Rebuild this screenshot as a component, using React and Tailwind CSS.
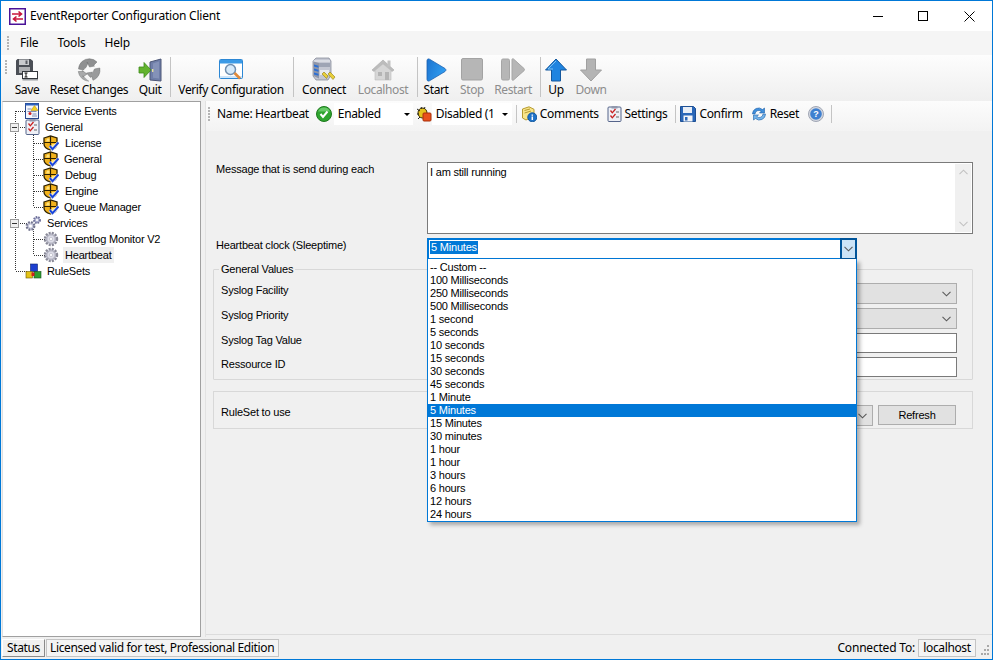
import React from "react";

const UI = { fontFamily: '"Noto Sans", "Open Sans", sans-serif' };
const MS = { fontFamily: '"Liberation Sans", Arial, sans-serif' };

function AppIcon() {
  return (
    <svg width="17" height="17" viewBox="0 0 17 17">
      <rect x="0.75" y="0.75" width="15.5" height="15.5" fill="#fff" stroke="#4a1298" strokeWidth="1.5" />
      <path d="M3 6h9M9.5 3.5 12.5 6 9.5 8.5" fill="none" stroke="#c8143c" strokeWidth="1.6" />
      <path d="M14 11H5M7.5 8.5 4.5 11l3 2.500" fill="none" stroke="#c8143c" strokeWidth="1.6" />
    </svg>
  );
}
function SaveBig() {
  return (
    <svg width="24" height="24" viewBox="0 0 24 24">
      <path d="M1 2.500 2.500 1h13L18 3v14H1z" fill="#4b4f56" />
      <rect x="4" y="1.500" width="10" height="5.500" fill="#c9cbce" />
      <rect x="10.500" y="2.500" width="2" height="3.500" fill="#5a5e64" />
      <rect x="4" y="9" width="11" height="6" fill="#aeb0b3" />
      <rect x="7.500" y="13.500" width="15" height="7" fill="#fff" stroke="#33373c" />
      <path d="M9.500 15h3M9.500 19h3M11 15v4" stroke="#111" fill="none" />
      <rect x="7.500" y="21" width="15.500" height="1.500" fill="#9a9da1" />
    </svg>
  );
}
function ResetBig() {
  return (
    <svg width="24" height="24" viewBox="0 0 24 24">
      <path d="M5 3.500A11 11 0 0 1 20 4l-3.500 3.500 1 .5L12.500 9 10 4l.8 1.500L9 9.500A6 6 0 0 0 6.500 12L1.500 11A11 11 0 0 1 5 3.500z" fill="#8f9091" stroke="#6f7071" strokeWidth="0.500" />
      <path d="M22.800 10A11 11 0 0 1 16 22.300L14.500 18l-1 1.500L9.500 15l5.300-.8-.6 1A6 6 0 0 0 17.500 11z" fill="#9a9b9c" stroke="#6f7071" strokeWidth="0.500" />
      <path d="M12 23.200A11 11 0 0 1 1.300 13.500L6 13.500l-.8-1L10 16l-4 3-.2-1.500" fill="#a9aaab" stroke="#6f7071" strokeWidth="0.500" />
    </svg>
  );
}
function QuitBig() {
  return (
    <svg width="24" height="24" viewBox="0 0 24 24">
      <path d="M12 4 23 1v22l-11-1z" fill="#6f7ea8" stroke="#4c5777" />
      <path d="M15 5.500 21 3.500v17l-6-.7z" fill="#8492b8" />
      <rect x="14" y="11" width="1.400" height="3" fill="#e8e0a0" />
      <path d="M1 9h5V4.500L13 12l-7 7.500V15H1z" fill="#63b32e" stroke="#3e8a1a" strokeWidth="0.800" />
    </svg>
  );
}
function VerifyBig() {
  return (
    <svg width="25" height="24" viewBox="0 0 25 24">
      <rect x="0.500" y="1.500" width="23" height="19" rx="1" fill="#fff" stroke="#2c87d4" />
      <rect x="1" y="2" width="22" height="3.500" fill="#3b9ae6" />
      <rect x="1" y="18" width="22" height="2" fill="#cfe6fa" />
      <circle cx="11.500" cy="11.500" r="5" fill="#d6eafa" stroke="#6f8fb0" strokeWidth="1.500" />
      <path d="m15.500 15 5.500 5.500" stroke="#e08a3a" strokeWidth="2.600" />
    </svg>
  );
}
function ConnectBig() {
  return (
    <svg width="26" height="26" viewBox="0 0 26 26">
      <path d="M2 4 5 1h13l2 3v14l-3 5H5l-3-4z" fill="#c4c7d2" stroke="#7d8190" strokeWidth="0.700" />
      <path d="M2.500 4H19" stroke="#eef0f4" fill="none" />
      <path d="M2.500 4.500 8 6v15.500L2.500 19z" fill="#8f96a8" />
      <path d="M3 7.500l4.500 1.200v2L3 9.500zM3 11.500l4.500 1.200v2L3 13.500zM3 15.500l4.500 1.200v2L3 17.500z" fill="#2b6fd4" />
      <path d="M8 6h11v4H8z" fill="#9ea4b4" />
      <path d="M9 13h9v5H9z" fill="#e8eaf0" />
      <path d="m11 17 2-2 4 4-1.500 2.500z" fill="#e9cf3a" stroke="#8d7a14" strokeWidth="0.600" />
      <path d="m17 17 2-2 5 5-2 2.500z" fill="#e9cf3a" stroke="#8d7a14" strokeWidth="0.600" />
    </svg>
  );
}
function HouseBig() {
  return (
    <svg width="24" height="24" viewBox="0 0 24 24">
      <path d="M1 12 12 2l11 10-2 1.500L12 6l-9 7.500z" fill="#bcbcbc" stroke="#aaa" strokeWidth="0.600" />
      <path d="M4 12.500 12 6l8 6.500V22H4z" fill="#d6d6d6" stroke="#bdbdbd" strokeWidth="0.600" />
      <rect x="7" y="14" width="4" height="4" fill="#b4b4b4" />
      <rect x="14" y="14" width="4" height="8" fill="#b4b4b4" />
      <rect x="16.500" y="2.500" width="3" height="6" fill="#c2c2c2" />
    </svg>
  );
}
function StartBig() {
  return (
    <svg width="22" height="24" viewBox="0 0 22 24">
      <defs>
        <linearGradient id="blueg" x1="0" y1="0" x2="1" y2="0.400">
          <stop offset="0" stopColor="#1c74d0" />
          <stop offset="1" stopColor="#2f9cf0" />
        </linearGradient>
      </defs>
      <path d="M2 2.500C2 1 3.500.5 4.500 1.200L20 10.500c1.200.8 1.200 2.200 0 3L4.500 22.800C3.500 23.500 2 23 2 21.500z" fill="url(#blueg)" stroke="#1a5fb0" strokeWidth="0.800" />
    </svg>
  );
}
function StopBig() {
  return (
    <svg width="22" height="23" viewBox="0 0 22 23">
      <rect x="0.500" y="0.500" width="21" height="21.500" rx="1.500" fill="#b6b6b6" stroke="#a3a3a3" />
    </svg>
  );
}
function RestartBig() {
  return (
    <svg width="24" height="23" viewBox="0 0 24 23">
      <rect x="0.500" y="1" width="8" height="21" rx="1.500" fill="#b6b6b6" stroke="#a6a6a6" />
      <path d="M11 1.500c0-.8 1-1 1.500-.5L23 10.500c.8.700.8 1.500 0 2.200L12.500 22c-.5.500-1.500.3-1.500-.5z" fill="#b6b6b6" stroke="#a6a6a6" />
    </svg>
  );
}
function UpBig() {
  return (
    <svg width="22" height="24" viewBox="0 0 22 24">
      <path d="M11 1 21.500 12H15.500V23H6.500V12H.500z" fill="#1f84e0" stroke="#14589e" strokeWidth="1" />
      <path d="M11 3 3 11h5" fill="none" stroke="#7cc1f5" strokeWidth="1" />
    </svg>
  );
}
function DownBig() {
  return (
    <svg width="22" height="24" viewBox="0 0 22 24">
      <path d="M6.500 1h9v11h6L11 23 .5 12h6z" fill="#b4b4b4" stroke="#a0a0a0" strokeWidth="1" />
    </svg>
  );
}

function Shield() {
  return (
    <svg width="16" height="16" viewBox="0 0 16 16" className="shrink-0">
      <path d="M1 3 7.500 1 14 3v6c0 3-3 5-6.500 6C4 14 1 12 1 9z" fill="#f2b21c" stroke="#2c2000" strokeWidth="1.300" />
      <path d="M7.500 1v13M1 7.500h13" stroke="#2c2000" strokeWidth="1.200" />
      <path d="M4 3.500h2.500v3H3zM9 9h3.500L11 12H9z" fill="#ffe27a" />
      <path d="m6.800 11 2.700 3.200L15.500 7.500" fill="none" stroke="#fff" strokeWidth="3.200" />
      <path d="m6.800 11 2.700 3.200L15.500 7.500" fill="none" stroke="#1a46d8" strokeWidth="2" />
    </svg>
  );
}
function Gears() {
  return (
    <svg width="17" height="17" viewBox="0 0 17 17" className="shrink-0">
      <circle cx="5.500" cy="11" r="3.800" fill="#c8c9dc" stroke="#74768f" strokeWidth="2.200" strokeDasharray="1.800 1.200" />
      <circle cx="5.500" cy="11" r="1.500" fill="#fff" />
      <circle cx="12" cy="5" r="3" fill="#b5b8d6" stroke="#70729a" strokeWidth="2" strokeDasharray="1.500 1" />
      <circle cx="12" cy="5" r="1.100" fill="#fff" />
    </svg>
  );
}
function Gear() {
  return (
    <svg width="16" height="16" viewBox="0 0 16 16" className="shrink-0">
      <circle cx="8" cy="8" r="6" fill="#d8d9e6" stroke="#8a8a98" strokeWidth="2.400" strokeDasharray="2 1.150" />
      <circle cx="8" cy="8" r="4.200" fill="#dddde8" stroke="#9a9aa8" strokeWidth="0.800" />
      <circle cx="8" cy="8" r="1.700" fill="#f8f8fb" stroke="#a8a8b4" strokeWidth="0.500" />
    </svg>
  );
}
function ServiceEventsIcon() {
  return (
    <svg width="15" height="16" viewBox="0 0 15 16" className="shrink-0">
      <rect x="0.500" y="0.500" width="13" height="15" fill="#f4f6fb" stroke="#27468c" />
      <rect x="0.500" y="0.500" width="13" height="2" fill="#2f62bd" />
      <path d="M2.500 6h4M2.500 8.500h9M7.500 11h4M7 13h5" stroke="#7f8db5" />
      <path d="M9.500 2.500 13 7.500H6z" fill="#f5d020" stroke="#b08a00" strokeWidth="0.500" />
      <circle cx="5" cy="10.500" r="1.500" fill="#d02020" />
    </svg>
  );
}
function CheckDoc({ size = 15 }) {
  return (
    <svg width={size} height={size + 1} viewBox="0 0 15 16" className="shrink-0">
      <rect x="1" y="1" width="13" height="14.500" rx="1" fill="#eef0f6" stroke="#55648a" />
      <rect x="4.500" y="0" width="6" height="2.500" fill="#9098ad" />
      <path d="m3.500 4.500 1.800 2.300L8.500 3" fill="none" stroke="#c81e1e" strokeWidth="1.300" />
      <path d="m3.500 9.500 1.800 2.300L8.500 8" fill="none" stroke="#c81e1e" strokeWidth="1.300" />
      <path d="M9 6h3M9 11h3" stroke="#666" />
    </svg>
  );
}
function RuleSetsIcon() {
  return (
    <svg width="17" height="17" viewBox="0 0 17 17" className="shrink-0">
      <rect x="5.500" y="1" width="7" height="7.500" fill="#1c3fd0" stroke="#10246c" strokeWidth="0.600" />
      <rect x="1" y="8.500" width="6.500" height="6.500" fill="#e4c316" stroke="#6a5806" strokeWidth="0.600" />
      <rect x="9" y="8.500" width="7" height="6.500" fill="#2e9e2e" stroke="#14501e" strokeWidth="0.600" />
      <rect x="6.500" y="9.500" width="3" height="3.500" fill="#d02020" />
    </svg>
  );
}
function GreenCheck() {
  return (
    <svg width="16" height="16" viewBox="0 0 16 16" className="shrink-0">
      <circle cx="8" cy="8" r="7.500" fill="#2fa52f" stroke="#1e7a1e" />
      <path d="M8 1.500a6.500 6.500 0 0 1 6 4H2a6.500 6.500 0 0 1 6-4z" fill="#7fd87f" opacity="0.700" />
      <path d="m4.500 8 2.500 3 4.500-5.500" fill="none" stroke="#fff" strokeWidth="2" />
    </svg>
  );
}
function BugIcon() {
  return (
    <svg width="16" height="16" viewBox="0 0 16 16" className="shrink-0">
      <ellipse cx="6.500" cy="7" rx="4.500" ry="5" fill="#e5c21e" stroke="#3a2d00" />
      <path d="M1 3l3 2M1 8h2M2 13l2-2M5 1l1 2M9 1 8 3" stroke="#222" fill="none" />
      <rect x="7" y="7" width="8" height="8" rx="1" fill="#e8501c" stroke="#a82e08" />
    </svg>
  );
}
function CommentsIcon() {
  return (
    <svg width="16" height="16" viewBox="0 0 16 16" className="shrink-0">
      <path d="M1.500 3 8 .8l5 2.500V10L5 14 1.500 12z" fill="#f8e58a" stroke="#b59a30" />
      <path d="M3.500 4.500 9 3M3.500 7 10 5" stroke="#b59a30" fill="none" />
      <circle cx="11.300" cy="11.300" r="4.500" fill="#1e72c8" stroke="#155a9e" />
      <path d="M11.300 8.500v1.200M11.300 10.500v3.500" stroke="#fff" strokeWidth="1.500" />
    </svg>
  );
}
function SaveSmall() {
  return (
    <svg width="16" height="16" viewBox="0 0 16 16" className="shrink-0">
      <path d="M.5.500h13l2 2v13H.5z" fill="#2a67b8" stroke="#1d4f94" />
      <rect x="3" y="1" width="9" height="6" fill="#e8eef6" />
      <rect x="3.500" y="9.500" width="9" height="6" fill="#f3f5f8" />
      <rect x="5" y="11" width="2.500" height="3.500" fill="#2a67b8" />
    </svg>
  );
}
function ResetSmall() {
  return (
    <svg width="16" height="16" viewBox="0 0 16 16" className="shrink-0">
      <path d="M1.500 8a6 6 0 0 1 10-4.500L13.500 2v5h-5l1.700-1.700A3.800 3.800 0 0 0 4 8z" fill="#3f8fdc" stroke="#1f5fa8" strokeWidth="0.600" />
      <path d="M14.500 8a6 6 0 0 1-10 4.500L2.500 14V9h5l-1.700 1.700A3.800 3.800 0 0 0 12 8z" fill="#74b4ea" stroke="#1f5fa8" strokeWidth="0.600" />
    </svg>
  );
}
function HelpIcon() {
  return (
    <svg width="16" height="16" viewBox="0 0 16 16" className="shrink-0">
      <circle cx="8" cy="8" r="7.500" fill="#d4d8e0" stroke="#a0a6b4" />
      <circle cx="8" cy="8" r="5.800" fill="#3f80d0" />
      <text x="8" y="11.200" textAnchor="middle" fontSize="9" fontWeight="700" fill="#fff" style={MS}>?</text>
    </svg>
  );
}
function Chevron({ color = "#5a5a5a" }) {
  return (
    <svg width="9" height="6" viewBox="0 0 9 6" className="shrink-0">
      <path d="M.5.800 4.500 4.800 8.500.800" fill="none" stroke={color} strokeWidth="1.100" />
    </svg>
  );
}
function Grip() {
  return (
    <div className="flex flex-col gap-[1px] w-[3px] shrink-0">
      {[0, 1, 2, 3, 4].map((i) => (
        <span key={i} className="block w-[2px] h-[2px] bg-[#b4b4b4]" />
      ))}
    </div>
  );
}
function Sep({ className }) {
  return <div className={"w-px bg-[#c4c4c4] shrink-0 " + className} />;
}
function ToolBtn({ icon, label, off, className }) {
  return (
    <div className={"flex flex-col items-center shrink-0 " + className}>
      <div className="h-[25px] flex items-center justify-center">{icon}</div>
      <span className={"text-[12px] leading-[16px] whitespace-nowrap tracking-[-0.38px] " + (off ? "text-[#8d8d8d]" : "text-black")}>{label}</span>
    </div>
  );
}
function TreeRow({ icon, label, iconClass, textClass, selected }) {
  return (
    <div className="h-4 flex items-center" style={MS}>
      <div className={"flex items-center " + iconClass}>{icon}</div>
      <span className={"text-[11px] leading-4 tracking-[-0.2px] whitespace-nowrap text-black px-[2px] " + textClass + (selected ? " bg-[#f0f0f0]" : "")}>{label}</span>
    </div>
  );
}
function Expander({ className }) {
  return (
    <div className={"absolute w-[9px] h-[9px] left-[7px] border border-[#9a9a9a] bg-[#f0f0f0] flex items-center justify-center " + className}>
      <span className="block w-[5px] h-px bg-[#333]" />
    </div>
  );
}
function SubItem({ icon, label, className }) {
  return (
    <div className={"flex items-center shrink-0 " + className}>
      {icon}
      <span className="text-[12px] tracking-[-0.35px] text-black whitespace-nowrap ml-[3px]">{label}</span>
    </div>
  );
}
function Caret() {
  return <span className="block w-0 h-0 border-x-[3px] border-x-transparent border-t-[3px] border-t-black" />;
}
function GreySelect({ className }) {
  return (
    <div className={"h-[21px] bg-[#e1e1e1] border border-[#adadad] flex items-center justify-end pr-[5px] " + className}>
      <Chevron />
    </div>
  );
}
const OPTIONS = ["-- Custom --", "100 Milliseconds", "250 Milliseconds", "500 Milliseconds", "1 second", "5 seconds", "10 seconds", "15 seconds", "30 seconds", "45 seconds", "1 Minute", "5 Minutes", "15 Minutes", "30 minutes", "1 hour", "1 hour", "3 hours", "6 hours", "12 hours", "24 hours"];

export default function App() {
  return (
    <div className="w-[993px] h-[660px] flex flex-col border border-[#0078d7] bg-[#f0f0f0] overflow-hidden" style={UI}>
      {/* Title bar */}
      <div className="h-[30px] bg-white flex items-center shrink-0 pl-2">
        <AppIcon />
        <span className="ml-[4px] text-[12px] tracking-[-0.22px] text-black">EventReporter Configuration Client</span>
        <div className="ml-auto flex items-center pr-[17px]">
          <span className="block w-[10px] h-px bg-black mr-[35px]" />
          <span className="block w-[10px] h-[10px] border border-black mr-[36px]" />
          <svg width="11" height="11" viewBox="0 0 11 11"><path d="M.5.500l10 10M10.500.500l-10 10" stroke="#000" fill="none" /></svg>
        </div>
      </div>
      {/* Menu */}
      <div className="h-6 bg-[#f5f5f5] flex items-center shrink-0 pl-[6px]">
        <Grip />
        <span className="text-[12px] tracking-[-0.2px] text-black ml-[10px]">File</span>
        <span className="text-[12px] tracking-[-0.2px] text-black ml-[19px]">Tools</span>
        <span className="text-[12px] tracking-[-0.2px] text-black ml-[19px]">Help</span>
      </div>
      {/* Toolbar */}
      <div className="h-[46px] bg-gradient-to-b from-[#fdfdfd] to-[#efefef] flex items-start shrink-0 pl-[4px] pt-[2px]">
        <div className="mt-[3px] mr-[5px]"><Grip /></div>
        <ToolBtn icon={<SaveBig />} label="Save" className="w-[30px] -ml-px" />
        <ToolBtn icon={<ResetBig />} label="Reset Changes" className="w-[80px] ml-[7px]" />
        <ToolBtn icon={<QuitBig />} label="Quit" className="w-[30px] ml-[6px]" />
        <Sep className="h-[40px] ml-[5px]" />
        <ToolBtn icon={<VerifyBig />} label="Verify Configuration" className="w-[114px] ml-[3px]" />
        <Sep className="h-[40px] ml-[5px]" />
        <ToolBtn icon={<ConnectBig />} label="Connect" className="w-[52px] ml-[4px]" />
        <ToolBtn off icon={<HouseBig />} label="Localhost" className="w-[58px] ml-[4px]" />
        <Sep className="h-[40px] ml-[5px]" />
        <ToolBtn icon={<StartBig />} label="Start" className="w-[30px] ml-[3px]" />
        <ToolBtn off icon={<StopBig />} label="Stop" className="w-[30px] ml-[6px]" />
        <ToolBtn off icon={<RestartBig />} label="Restart" className="w-[42px] ml-[5px]" />
        <Sep className="h-[40px] ml-[6px]" />
        <ToolBtn icon={<UpBig />} label="Up" className="w-[24px] ml-[3px]" />
        <ToolBtn off icon={<DownBig />} label="Down" className="w-[34px] ml-[6px]" />
      </div>
      {/* Body */}
      <div className="flex-1 flex min-h-0">
        {/* Tree */}
        <div className="w-[199px] shrink-0 ml-px bg-white border-t border-r border-b border-l border-t-[#a0a0a0] border-r-[#a0a0a0] border-b-[#a0a0a0] border-l-[#e0e0e0] relative pt-[1px]">
          <svg width="60" height="190" className="absolute left-[-3px] top-[-2px]" shapeRendering="crispEdges">
            <g stroke="#333" strokeDasharray="1 1" fill="none">
              <path d="M15.500 11v160M16 11.500h11M20 27.500h7M33.500 33v74M34 43.500h11M34 59.500h11M34 75.500h11M34 91.500h11M34 107.500h11M20 123.500h7M33.500 129v26M34 139.500h11M34 155.500h11M16 171.500h11" />
            </g>
          </svg>
          <Expander className="top-[21px]" />
          <Expander className="top-[117px]" />
          <div className="relative">
            <TreeRow icon={<ServiceEventsIcon />} label="Service Events" iconClass="ml-[22px]" textClass="ml-[4px]" />
            <TreeRow icon={<CheckDoc />} label="General" iconClass="ml-[22px]" textClass="ml-[3px]" />
            <TreeRow icon={<Shield />} label="License" iconClass="ml-[40px]" textClass="ml-[4px]" />
            <TreeRow icon={<Shield />} label="General" iconClass="ml-[40px]" textClass="ml-[3px]" />
            <TreeRow icon={<Shield />} label="Debug" iconClass="ml-[40px]" textClass="ml-[4px]" />
            <TreeRow icon={<Shield />} label="Engine" iconClass="ml-[40px]" textClass="ml-[4px]" />
            <TreeRow icon={<Shield />} label="Queue Manager" iconClass="ml-[40px]" textClass="ml-[3px]" />
            <TreeRow icon={<Gears />} label="Services" iconClass="ml-[22px]" textClass="ml-[3px]" />
            <TreeRow icon={<Gear />} label="Eventlog Monitor V2" iconClass="ml-[40px]" textClass="ml-[4px]" />
            <TreeRow icon={<Gear />} label="Heartbeat" iconClass="ml-[40px]" textClass="ml-[4px]" selected />
            <TreeRow icon={<RuleSetsIcon />} label="RuleSets" iconClass="ml-[22px]" textClass="ml-[3px]" />
          </div>
        </div>
        {/* Right */}
        <div className="flex-1 flex flex-col ml-[4px] border-l border-[#e2e2e2] min-w-0">
          <div className="h-[30px] bg-gradient-to-b from-[#fcfcfc] to-[#f3f3f3] flex items-center shrink-0 pl-[2px] pb-[4px] text-[12px]">
            <Grip />
            <span className="ml-[6px] text-[12px] tracking-[-0.35px] text-black whitespace-nowrap">Name: Heartbeat</span>
            <div className="ml-[7px] shrink-0"><GreenCheck /></div>
            <div className="w-[79px] h-[22px] bg-white ml-[2px] flex items-center pl-[4px] pr-[3px] shrink-0">
              <span className="tracking-[-0.35px] text-black">Enabled</span>
              <span className="ml-auto"><Caret /></span>
            </div>
            <div className="ml-[3px] shrink-0"><BugIcon /></div>
            <div className="w-[80px] h-[22px] bg-white flex items-center pl-[4px] pr-[4px] shrink-0">
              <span className="tracking-[-0.35px] text-black whitespace-nowrap">Disabled (1</span>
              <span className="ml-auto"><Caret /></span>
            </div>
            <Sep className="h-[18px] ml-[4px]" />
            <SubItem icon={<CommentsIcon />} label="Comments" className="ml-[4px]" />
            <SubItem icon={<CheckDoc size={15} />} label="Settings" className="ml-[8px]" />
            <Sep className="h-[18px] ml-[8px]" />
            <SubItem icon={<SaveSmall />} label="Confirm" className="ml-[4px]" />
            <SubItem icon={<ResetSmall />} label="Reset" className="ml-[8px]" />
            <div className="ml-[9px] shrink-0"><HelpIcon /></div>
            <Sep className="h-[18px] ml-[7px]" />
          </div>
          {/* Form */}
          <div className="flex-1 relative border-b border-[#dcdcdc] mb-[2px] pt-[31px] text-[11px] tracking-[-0.2px] text-black min-h-0" style={MS}>
            <div className="flex h-[72px] pl-[10px] pr-[19px]">
              <span className="w-[211px] shrink-0 -mt-px">Message that is send during each</span>
              <div className="flex-1 bg-white border border-[#7a7a7a] flex justify-between min-w-0">
                <span className="ml-[2px] mt-px">I am still running</span>
                <div className="w-[16px] bg-[#f0f0f0] my-px mr-px flex flex-col justify-between items-center py-[5px]">
                  <span className="rotate-180 block leading-none"><Chevron color="#c2c2c2" /></span>
                  <Chevron color="#c2c2c2" />
                </div>
              </div>
            </div>
            <div className="flex mt-[4px] pl-[10px] h-[21px]">
              <span className="w-[211px] shrink-0 -mt-px">Heartbeat clock (Sleeptime)</span>
              <div className="w-[430px] h-[22px] bg-white border-2 border-[#0078d7] flex items-start justify-between">
                <span className="ml-px mt-px px-px h-[13px] leading-[13px] bg-[#0078d7] text-white">5 Minutes</span>
                <div className="w-[17px] h-[22px] -mt-[2px] -mr-[2px] bg-[#cce4f7] border-2 border-[#005499] flex items-center justify-center"><Chevron /></div>
              </div>
            </div>
            {/* General values group */}
            <div className="relative mt-[10px] ml-[7px] mr-[19px] h-[111px] border border-[#d8d8d8] rounded-[1px] pt-[13px] pl-[7px] pr-[15px]">
              <span className="absolute -top-[7px] left-[5px] bg-[#f0f0f0] px-[2px] leading-[13px]">General Values</span>
              <div className="flex h-[21px] items-start">
                <span className="w-[206px] shrink-0 -mt-px">Syslog Facility</span>
                <GreySelect className="flex-1" />
              </div>
              <div className="flex h-[21px] items-start mt-[4px]">
                <span className="w-[206px] shrink-0 -mt-px">Syslog Priority</span>
                <GreySelect className="flex-1" />
              </div>
              <div className="flex h-[20px] items-start mt-[4px]">
                <span className="w-[206px] shrink-0 -mt-px">Syslog Tag Value</span>
                <div className="flex-1 h-[20px] bg-white border border-[#7a7a7a]" />
              </div>
              <div className="flex h-[20px] items-start mt-[4px]">
                <span className="w-[206px] shrink-0 -mt-px">Ressource ID</span>
                <div className="flex-1 h-[20px] bg-white border border-[#7a7a7a]" />
              </div>
            </div>
            {/* Ruleset group */}
            <div className="mt-[11px] ml-[7px] mr-[19px] h-[38px] border border-[#d8d8d8] pl-[7px] pr-[15px] flex items-start pt-[14px]">
              <span className="w-[206px] shrink-0 -mt-[2px]">RuleSet to use</span>
              <GreySelect className="w-[446px] -mt-px" />
              <div className="ml-[5px] w-[78px] h-[20px] -mt-px bg-[#e1e1e1] border border-[#adadad] flex items-center justify-center pt-px">Refresh</div>
            </div>
            {/* Open dropdown list */}
            <div className="absolute left-[221px] top-[128px] w-[430px] bg-white border border-[#0078d7] border-t-0 shadow-[3px_3px_4px_rgba(0,0,0,0.3)] pt-[2px]">
              {OPTIONS.map((o, i) => (
                <div key={i} className={"h-[13px] leading-[13px] pl-[2px] whitespace-nowrap " + (i === 11 ? "bg-[#0078d7] text-white" : "text-black")}>{o}</div>
              ))}
            </div>
          </div>
        </div>
      </div>
      {/* Status */}
      <div className="h-[22px] bg-[#f0f0f0] flex items-center shrink-0 pl-px text-[12px] tracking-[-0.36px] text-black">
        <div className="h-[18px] w-[43px] border border-t-white border-l-white border-r-[#8a8a8a] border-b-[#8a8a8a] bg-[#f0f0f0] flex items-center justify-center">Status</div>
        <div className="h-[18px] w-[233px] ml-px border border-[#c4c4c4] bg-[#f4f4f4] flex items-center pl-[3px] whitespace-nowrap">Licensed valid for test, Professional Edition</div>
        <span className="ml-auto tracking-[-0.2px]">Connected To:</span>
        <div className="h-[18px] w-[58px] ml-[3px] border border-[#c4c4c4] bg-[#f4f4f4] flex items-center justify-center">localhost</div>
        <svg width="16" height="18" viewBox="0 0 16 18" className="shrink-0" shapeRendering="crispEdges">
          <g fill="#a8a8a8">
            <rect x="11" y="6" width="2" height="2" />
            <rect x="8" y="10" width="2" height="2" />
            <rect x="11" y="10" width="2" height="2" />
            <rect x="5" y="14" width="2" height="2" />
            <rect x="8" y="14" width="2" height="2" />
            <rect x="11" y="14" width="2" height="2" />
          </g>
        </svg>
      </div>
    </div>
  );
}
